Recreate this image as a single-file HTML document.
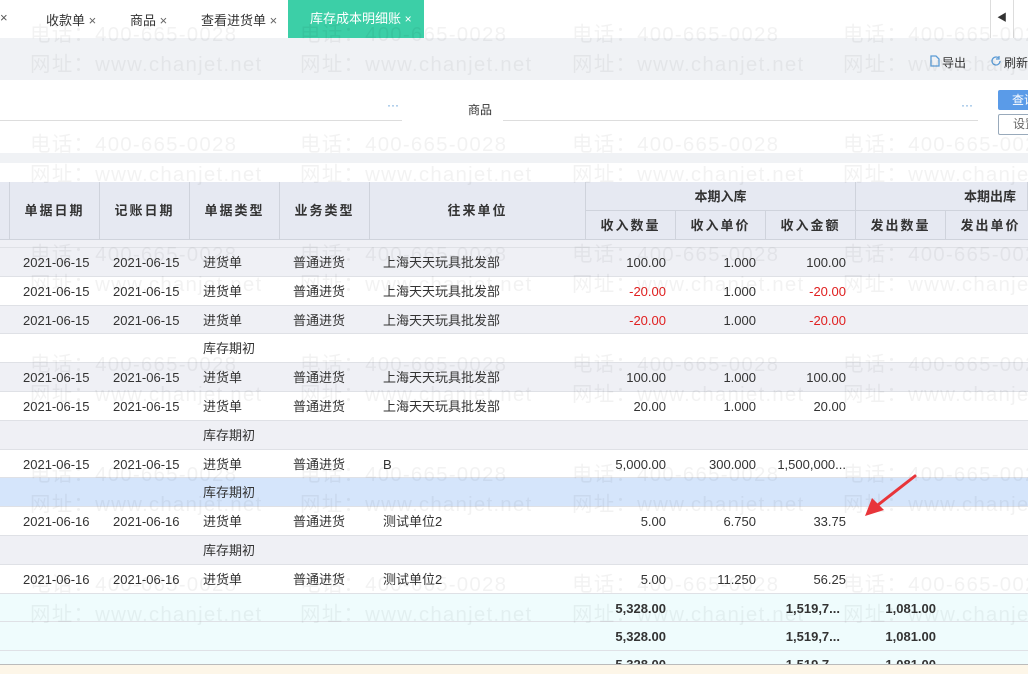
<!DOCTYPE html>
<html><head><meta charset="utf-8"><style>
*{margin:0;padding:0;box-sizing:border-box}
body{width:1028px;height:674px;overflow:hidden;position:relative;background:#fff;font-family:"Liberation Sans","Noto Sans CJK SC",sans-serif;font-size:13px;color:#333}
.a{position:absolute;white-space:nowrap}
.wm{position:absolute;font-size:20.5px;color:rgba(0,0,0,0.05);white-space:nowrap;z-index:20;letter-spacing:1.2px}
.row{position:absolute;left:0;width:1028px;height:29px;border-bottom:1px solid #dfe1e6}
.c{position:absolute;top:0;line-height:29px;font-size:13px;color:#333}
.r{text-align:right}
.hd{position:absolute;background:#e6e9f2;border-right:1px solid #cfd3dc;border-bottom:1px solid #cfd3dc;font-weight:bold;font-size:13px;color:#333;text-align:center;letter-spacing:2px}
</style></head><body>
<!-- tabs -->
<div class="a" style="left:0;top:10px;color:#555">×</div>
<div class="a" style="left:46px;top:10px">收款单 <span style="color:#666">×</span></div>
<div class="a" style="left:130px;top:10px">商品 <span style="color:#666">×</span></div>
<div class="a" style="left:201px;top:10px">查看进货单 <span style="color:#666">×</span></div>
<div class="a" style="left:288px;top:0;width:136px;height:38px;background:#3ccfa7;color:#fff;line-height:38px;padding-left:22px">库存成本明细账 <span style="font-size:12px">×</span></div>
<div class="a" style="left:990px;top:0;width:24px;height:38px;border-left:1px solid #ddd;border-right:1px solid #ddd;font-size:10px;line-height:38px;text-align:center">◀</div>
<!-- toolbar -->
<div class="a" style="left:0;top:38px;width:1028px;height:42px;background:#f0f2f5"></div>
<svg class="a" style="left:929px;top:55px" width="11" height="12"><path d="M2 1h5l3 3v7H2z" fill="none" stroke="#5b9bd5" stroke-width="1.3"/></svg>
<div class="a" style="left:942px;top:54px;font-size:12px">导出</div>
<svg class="a" style="left:990px;top:55px" width="12" height="12"><path d="M10 6a4 4 0 1 1-1.5-3.1" fill="none" stroke="#5b9bd5" stroke-width="1.3"/><path d="M9 1v3h-3" fill="none" stroke="#5b9bd5" stroke-width="1.3"/></svg>
<div class="a" style="left:1004px;top:54px;font-size:12px">刷新</div>
<!-- filter -->
<div class="a" style="left:0;top:120px;width:402px;border-top:1px solid #ddd"></div>
<div class="a" style="left:387px;top:98px;color:#5b9bd5;font-size:12px">···</div>
<div class="a" style="left:468px;top:101px;font-size:12px">商品</div>
<div class="a" style="left:503px;top:120px;width:475px;border-top:1px solid #ddd"></div>
<div class="a" style="left:961px;top:98px;color:#5b9bd5;font-size:12px">···</div>
<div class="a" style="left:998px;top:90px;width:40px;height:20px;background:#5a9be8;border-radius:2px;color:#fff;font-size:12px;line-height:20px;padding-left:14px">查询</div>
<div class="a" style="left:998px;top:114px;width:40px;height:21px;border:1px solid #9ab;border-radius:2px;color:#666;font-size:12px;line-height:19px;padding-left:14px">设置</div>
<div class="a" style="left:0;top:153px;width:1028px;height:10px;background:#f0f2f5"></div>
<!-- header -->
<div class="hd" style="left:0;top:182px;width:10px;height:58px"></div>
<div class="hd" style="left:10px;top:182px;width:90px;height:58px;line-height:58px">单据日期</div>
<div class="hd" style="left:100px;top:182px;width:90px;height:58px;line-height:58px">记账日期</div>
<div class="hd" style="left:190px;top:182px;width:90px;height:58px;line-height:58px">单据类型</div>
<div class="hd" style="left:280px;top:182px;width:90px;height:58px;line-height:58px">业务类型</div>
<div class="hd" style="left:370px;top:182px;width:216px;height:58px;line-height:58px">往来单位</div>
<div class="hd" style="left:586px;top:182px;width:270px;height:29px;line-height:29px;letter-spacing:0">本期入库</div>
<div class="hd" style="left:856px;top:182px;width:172px;height:29px;line-height:29px;letter-spacing:0;text-align:left;padding-left:108px">本期出库</div>
<div class="hd" style="left:586px;top:211px;width:90px;height:29px;line-height:29px">收入数量</div>
<div class="hd" style="left:676px;top:211px;width:90px;height:29px;line-height:29px">收入单价</div>
<div class="hd" style="left:766px;top:211px;width:90px;height:29px;line-height:29px">收入金额</div>
<div class="hd" style="left:856px;top:211px;width:90px;height:29px;line-height:29px">发出数量</div>
<div class="hd" style="left:946px;top:211px;width:90px;height:29px;line-height:29px">发出单价</div>
<div class="row" style="top:240px;height:8px;background:#eff0f5"></div>
<!-- rows -->
<div class="row" style="top:248px;background:#eff0f5"><span class="c" style="left:23px">2021-06-15</span><span class="c" style="left:113px">2021-06-15</span><span class="c" style="left:203px">进货单</span><span class="c" style="left:293px">普通进货</span><span class="c" style="left:383px">上海天天玩具批发部</span><span class="c r" style="right:362px">100.00</span><span class="c r" style="right:272px">1.000</span><span class="c r" style="right:182px">100.00</span></div>
<div class="row" style="top:277px;background:#fff"><span class="c" style="left:23px">2021-06-15</span><span class="c" style="left:113px">2021-06-15</span><span class="c" style="left:203px">进货单</span><span class="c" style="left:293px">普通进货</span><span class="c" style="left:383px">上海天天玩具批发部</span><span class="c r" style="right:362px;color:#e02020">-20.00</span><span class="c r" style="right:272px">1.000</span><span class="c r" style="right:182px;color:#e02020">-20.00</span></div>
<div class="row" style="top:306px;height:28px;background:#eff0f5"><span class="c" style="left:23px">2021-06-15</span><span class="c" style="left:113px">2021-06-15</span><span class="c" style="left:203px">进货单</span><span class="c" style="left:293px">普通进货</span><span class="c" style="left:383px">上海天天玩具批发部</span><span class="c r" style="right:362px;color:#e02020">-20.00</span><span class="c r" style="right:272px">1.000</span><span class="c r" style="right:182px;color:#e02020">-20.00</span></div>
<div class="row" style="top:334px;background:#fff"><span class="c" style="left:203px">库存期初</span></div>
<div class="row" style="top:363px;background:#eff0f5"><span class="c" style="left:23px">2021-06-15</span><span class="c" style="left:113px">2021-06-15</span><span class="c" style="left:203px">进货单</span><span class="c" style="left:293px">普通进货</span><span class="c" style="left:383px">上海天天玩具批发部</span><span class="c r" style="right:362px">100.00</span><span class="c r" style="right:272px">1.000</span><span class="c r" style="right:182px">100.00</span></div>
<div class="row" style="top:392px;background:#fff"><span class="c" style="left:23px">2021-06-15</span><span class="c" style="left:113px">2021-06-15</span><span class="c" style="left:203px">进货单</span><span class="c" style="left:293px">普通进货</span><span class="c" style="left:383px">上海天天玩具批发部</span><span class="c r" style="right:362px">20.00</span><span class="c r" style="right:272px">1.000</span><span class="c r" style="right:182px">20.00</span></div>
<div class="row" style="top:421px;background:#eff0f5"><span class="c" style="left:203px">库存期初</span></div>
<div class="row" style="top:450px;height:28px;background:#fff"><span class="c" style="left:23px">2021-06-15</span><span class="c" style="left:113px">2021-06-15</span><span class="c" style="left:203px">进货单</span><span class="c" style="left:293px">普通进货</span><span class="c" style="left:383px">B</span><span class="c r" style="right:362px">5,000.00</span><span class="c r" style="right:272px">300.000</span><span class="c r" style="right:182px">1,500,000...</span></div>
<div class="row" style="top:478px;background:#d5e5fb"><span class="c" style="left:203px">库存期初</span></div>
<div class="row" style="top:507px;background:#fff"><span class="c" style="left:23px">2021-06-16</span><span class="c" style="left:113px">2021-06-16</span><span class="c" style="left:203px">进货单</span><span class="c" style="left:293px">普通进货</span><span class="c" style="left:383px">测试单位2</span><span class="c r" style="right:362px">5.00</span><span class="c r" style="right:272px">6.750</span><span class="c r" style="right:182px">33.75</span></div>
<div class="row" style="top:536px;background:#eff0f5"><span class="c" style="left:203px">库存期初</span></div>
<div class="row" style="top:565px;background:#fff"><span class="c" style="left:23px">2021-06-16</span><span class="c" style="left:113px">2021-06-16</span><span class="c" style="left:203px">进货单</span><span class="c" style="left:293px">普通进货</span><span class="c" style="left:383px">测试单位2</span><span class="c r" style="right:362px">5.00</span><span class="c r" style="right:272px">11.250</span><span class="c r" style="right:182px">56.25</span></div>
<div class="row" style="top:594px;height:28px;background:#effcfd;font-weight:bold"><span class="c r" style="right:362px;font-weight:bold">5,328.00</span><span class="c r" style="right:188px;font-weight:bold">1,519,7...</span><span class="c r" style="right:92px;font-weight:bold">1,081.00</span></div>
<div class="row" style="top:622px;background:#effcfd"><span class="c r" style="right:362px;font-weight:bold">5,328.00</span><span class="c r" style="right:188px;font-weight:bold">1,519,7...</span><span class="c r" style="right:92px;font-weight:bold">1,081.00</span></div>
<div class="row" style="top:651px;height:14px;background:#effcfd;overflow:hidden;border-bottom:1px solid #bbb"><span class="c r" style="right:362px;font-weight:bold;top:-1px">5,328.00</span><span class="c r" style="right:188px;font-weight:bold;top:-1px">1,519,7...</span><span class="c r" style="right:92px;font-weight:bold;top:-1px">1,081.00</span></div>
<div class="a" style="left:0;top:665px;width:1028px;height:9px;background:#fdf6e8"></div>
<!-- arrow -->
<svg class="a" style="left:860px;top:472px;z-index:30" width="60" height="50"><path d="M55 4 L14 36" stroke="#e8353a" stroke-width="3" stroke-linecap="round"/><path d="M5 44 L12 26 L24 38 Z" fill="#e8353a"/></svg>
<!-- watermarks -->
<div class="wm" style="left:30px;top:17px">电话：400-665-0028</div><div class="wm" style="left:300px;top:17px">电话：400-665-0028</div><div class="wm" style="left:572px;top:17px">电话：400-665-0028</div><div class="wm" style="left:843px;top:17px">电话：400-665-0028</div>
<div class="wm" style="left:30px;top:47px">网址：www.chanjet.net</div><div class="wm" style="left:300px;top:47px">网址：www.chanjet.net</div><div class="wm" style="left:572px;top:47px">网址：www.chanjet.net</div><div class="wm" style="left:843px;top:47px">网址：www.chanjet.net</div>
<div class="wm" style="left:30px;top:127px">电话：400-665-0028</div><div class="wm" style="left:300px;top:127px">电话：400-665-0028</div><div class="wm" style="left:572px;top:127px">电话：400-665-0028</div><div class="wm" style="left:843px;top:127px">电话：400-665-0028</div>
<div class="wm" style="left:30px;top:157px">网址：www.chanjet.net</div><div class="wm" style="left:300px;top:157px">网址：www.chanjet.net</div><div class="wm" style="left:572px;top:157px">网址：www.chanjet.net</div><div class="wm" style="left:843px;top:157px">网址：www.chanjet.net</div>
<div class="wm" style="left:30px;top:237px">电话：400-665-0028</div><div class="wm" style="left:300px;top:237px">电话：400-665-0028</div><div class="wm" style="left:572px;top:237px">电话：400-665-0028</div><div class="wm" style="left:843px;top:237px">电话：400-665-0028</div>
<div class="wm" style="left:30px;top:267px">网址：www.chanjet.net</div><div class="wm" style="left:300px;top:267px">网址：www.chanjet.net</div><div class="wm" style="left:572px;top:267px">网址：www.chanjet.net</div><div class="wm" style="left:843px;top:267px">网址：www.chanjet.net</div>
<div class="wm" style="left:30px;top:347px">电话：400-665-0028</div><div class="wm" style="left:300px;top:347px">电话：400-665-0028</div><div class="wm" style="left:572px;top:347px">电话：400-665-0028</div><div class="wm" style="left:843px;top:347px">电话：400-665-0028</div>
<div class="wm" style="left:30px;top:377px">网址：www.chanjet.net</div><div class="wm" style="left:300px;top:377px">网址：www.chanjet.net</div><div class="wm" style="left:572px;top:377px">网址：www.chanjet.net</div><div class="wm" style="left:843px;top:377px">网址：www.chanjet.net</div>
<div class="wm" style="left:30px;top:457px">电话：400-665-0028</div><div class="wm" style="left:300px;top:457px">电话：400-665-0028</div><div class="wm" style="left:572px;top:457px">电话：400-665-0028</div><div class="wm" style="left:843px;top:457px">电话：400-665-0028</div>
<div class="wm" style="left:30px;top:487px">网址：www.chanjet.net</div><div class="wm" style="left:300px;top:487px">网址：www.chanjet.net</div><div class="wm" style="left:572px;top:487px">网址：www.chanjet.net</div><div class="wm" style="left:843px;top:487px">网址：www.chanjet.net</div>
<div class="wm" style="left:30px;top:567px">电话：400-665-0028</div><div class="wm" style="left:300px;top:567px">电话：400-665-0028</div><div class="wm" style="left:572px;top:567px">电话：400-665-0028</div><div class="wm" style="left:843px;top:567px">电话：400-665-0028</div>
<div class="wm" style="left:30px;top:597px">网址：www.chanjet.net</div><div class="wm" style="left:300px;top:597px">网址：www.chanjet.net</div><div class="wm" style="left:572px;top:597px">网址：www.chanjet.net</div><div class="wm" style="left:843px;top:597px">网址：www.chanjet.net</div>
</body></html>
